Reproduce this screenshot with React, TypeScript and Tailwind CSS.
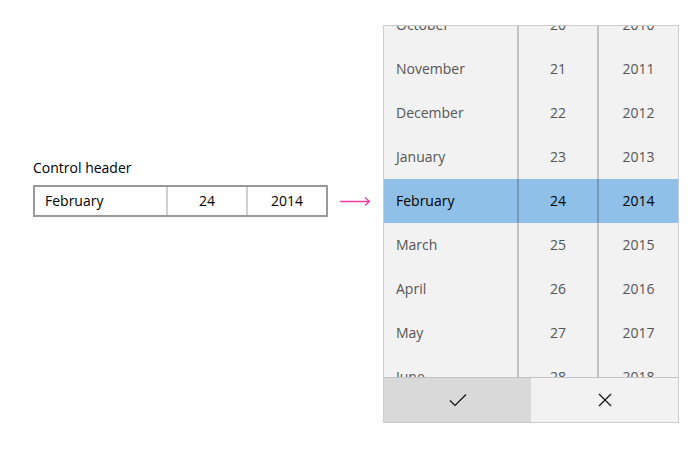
const months = ["October", "November", "December", "January", "February", "March", "April", "May", "June"];
const days = [20, 21, 22, 23, 24, 25, 26, 27, 28];
const years = [2010, 2011, 2012, 2013, 2014, 2015, 2016, 2017, 2018];

const font = { fontFamily: '"Open Sans", "Noto Sans", sans-serif' };

export default function App() {
  return (
    <div
      className="flex h-[456px] w-[700px] items-start bg-white pl-[33px] pt-[25px]"
      style={font}
    >
      {/* closed control */}
      <div className="mt-[133px] flex items-center">
        <div>
          <p className="h-[20px] text-[14px] leading-[20px] text-black">Control header</p>
          <div className="mt-[7px] flex h-[32px] w-[295px] border-2 border-[#999999] text-[14px] text-black">
            <div className="flex w-[131px] items-center pb-[2px] pl-[10px]">February</div>
            <div className="flex w-[80px] items-center justify-center border-l-2 border-[#d0d0d0] pb-[2px]">24</div>
            <div className="flex w-[80px] items-center justify-center border-l-2 border-[#d0d0d0] pb-[2px]">2014</div>
          </div>
        </div>
        <svg className="ml-[12px] mt-[27px]" width="31" height="10" viewBox="0 0 31 10">
          <path d="M0 5.5H29.5M25 1.5L29.5 5.5L25 9.5" fill="none" stroke="#ea3f9e" strokeWidth="1.3" />
        </svg>
      </div>

      {/* open flyout */}
      <div className="ml-[12px] flex h-[398px] w-[296px] flex-col border border-[#cccccc] bg-[#f2f2f2]">
        <div className="h-[351px] overflow-hidden">
          <div className="-mt-[23px]">
            {months.map((m, i) => {
              const sel = i === 4;
              return (
                <div
                  key={m}
                  className={`flex h-[44px] text-[14px] ${sel ? "bg-[#90c0e8] text-black" : "text-[#555555]"}`}
                >
                  <div className="flex w-[133px] items-center pb-[2px] pl-[12px]">{m}</div>
                  <div className="flex w-[80px] items-center justify-center border-l-2 border-black/20 pb-[2px]">{days[i]}</div>
                  <div className="flex w-[81px] items-center justify-center border-l-2 border-black/20 pb-[2px]">{years[i]}</div>
                </div>
              );
            })}
          </div>
        </div>
        <div className="grid h-[45px] grid-cols-2 border-t border-[#c4c4c4]">
          <button className="flex items-center justify-center bg-[#d9d9d9]">
            <svg width="18" height="14" viewBox="0 0 18 14">
              <path d="M1 7.5L6 12.5L17 1.5" fill="none" stroke="#111" strokeWidth="1.2" />
            </svg>
          </button>
          <button className="flex items-center justify-center bg-[#f2f2f2]">
            <svg width="14" height="14" viewBox="0 0 14 14">
              <path d="M1 1L13 13M13 1L1 13" fill="none" stroke="#111" strokeWidth="1.2" />
            </svg>
          </button>
        </div>
      </div>
    </div>
  );
}
